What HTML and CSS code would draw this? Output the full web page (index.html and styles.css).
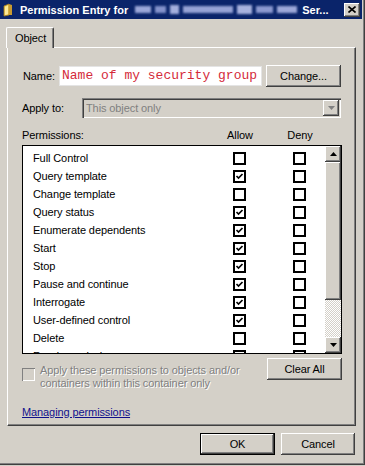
FILE: index.html
```html
<!DOCTYPE html>
<html lang="en">
<head>
    <meta charset="UTF-8">
    <title>Permission Entry</title>
    <link rel="stylesheet" href="styles.css">
</head>
<body>
    <div class="window">
        <div class="titlebar">
            <svg class="title-icon" width="10" height="14" viewBox="0 0 10 14">
                <path d="M1 3 L6 1 L6 12 L1 13 Z" fill="#f4d35c" stroke="#a07820" stroke-width="0.8"/>
                <path d="M6 1 L9 2 L9 12 L6 12 Z" fill="#c89a30"/>
                <path d="M2 4 L5 2.6 L5 11 L2 12 Z" fill="#fbe89a"/>
            </svg>
            <span class="title-text">Permission Entry for</span>
            <span class="blur-name">
                <i class="b1"></i><i class="b2"></i><i class="b3"></i><i class="b4"></i><i class="b5"></i><i class="b6"></i><i class="b7"></i>
            </span>
            <span class="title-text">Ser...</span>
            <button class="close-btn raised" type="button">
                <svg width="8" height="7" viewBox="0 0 8 7"><path d="M0.5 0.5 L7.5 6.5 M7.5 0.5 L0.5 6.5" stroke="#000" stroke-width="1.6"/></svg>
            </button>
        </div>

        <div class="tabs">
            <div class="tab">Object</div>
        </div>

        <div class="panel">
            <div class="name-row">
                <label class="label-name">Name:</label>
                <div class="name-field">Name of my security group</div>
                <button class="btn raised" type="button">Change...</button>
            </div>

            <div class="apply-row">
                <label class="label-apply">Apply to:</label>
                <div class="select">
                    <span>This object only</span>
                    <span class="select-arrow raised">
                        <svg width="7" height="4" viewBox="0 0 7 4"><path d="M0 0 H7 L3.5 4 Z" fill="#808080"/></svg>
                    </span>
                </div>
            </div>

            <div class="perm-header">
                <span>Permissions:</span>
                <span class="col-head">Allow</span>
                <span></span>
                <span class="col-head">Deny</span>
            </div>

            <div class="perm-list">
                <div class="rows">
                    <div class="row"><span>Full Control</span><i class="cb"></i><span></span><i class="cb"></i></div>
                    <div class="row"><span>Query template</span><i class="cb checked"></i><span></span><i class="cb"></i></div>
                    <div class="row"><span>Change template</span><i class="cb"></i><span></span><i class="cb"></i></div>
                    <div class="row"><span>Query status</span><i class="cb checked"></i><span></span><i class="cb"></i></div>
                    <div class="row"><span>Enumerate dependents</span><i class="cb checked"></i><span></span><i class="cb"></i></div>
                    <div class="row"><span>Start</span><i class="cb checked"></i><span></span><i class="cb"></i></div>
                    <div class="row"><span>Stop</span><i class="cb checked"></i><span></span><i class="cb"></i></div>
                    <div class="row"><span>Pause and continue</span><i class="cb checked"></i><span></span><i class="cb"></i></div>
                    <div class="row"><span>Interrogate</span><i class="cb checked"></i><span></span><i class="cb"></i></div>
                    <div class="row"><span>User-defined control</span><i class="cb checked"></i><span></span><i class="cb"></i></div>
                    <div class="row"><span>Delete</span><i class="cb"></i><span></span><i class="cb"></i></div>
                    <div class="row"><span>Read permissions</span><i class="cb"></i><span></span><i class="cb"></i></div>
                </div>
                <div class="scrollbar">
                    <span class="scroll-btn raised">
                        <svg width="7" height="4" viewBox="0 0 7 4"><path d="M0 4 H7 L3.5 0 Z" fill="#000"/></svg>
                    </span>
                    <span class="scroll-thumb raised"></span>
                    <span class="scroll-track"></span>
                    <span class="scroll-btn raised">
                        <svg width="7" height="4" viewBox="0 0 7 4"><path d="M0 0 H7 L3.5 4 Z" fill="#000"/></svg>
                    </span>
                </div>
            </div>

            <div class="bottom-row">
                <div class="apply-check">
                    <i class="cb-disabled"></i>
                    <span class="disabled-text">Apply these permissions to objects and/or<br>containers within this container only</span>
                </div>
                <button class="btn raised" type="button">Clear All</button>
            </div>

            <a class="help-link" href="#">Managing permissions</a>
        </div>

        <div class="footer">
            <button class="btn raised btn-default" type="button">OK</button>
            <button class="btn raised btn-cancel" type="button">Cancel</button>
        </div>
    </div>
</body>
</html>
```

FILE: styles.css
```css
* {
    margin: 0;
    padding: 0;
    box-sizing: border-box;
}

body {
    background-color: #d4d0c8;
    font-family: "Liberation Sans", Arial, sans-serif;
    font-size: 11px;
    letter-spacing: -0.1px;
    color: #000;
}

.raised {
    background-color: #d4d0c8;
    box-shadow: inset -1px -1px #404040, inset 1px 1px #fff, inset -2px -2px #808080, inset 2px 2px #d4d0c8;
}

.window {
    width: 365px;
    height: 465px;
    padding-right: 3px;
    background-color: #d4d0c8;
    box-shadow: inset -1px -1px #404040, inset -2px -2px #808080;
}

.titlebar {
    height: 19px;
    background-color: #0a246a;
    display: flex;
    align-items: center;
    color: #fff;
    font-weight: bold;
    letter-spacing: 0;
}

.title-icon {
    margin-left: 3px;
}

.title-text {
    margin-left: 7px;
    white-space: nowrap;
}

.title-text + .blur-name {
    margin-left: 7px;
}

.blur-name {
    display: flex;
    align-items: center;
    gap: 4px;
    height: 10px;
    filter: blur(1px);

    i {
        display: block;
        height: 7px;
        background-color: #8794cc;
    }

    .b1 { width: 16px; background-color: #9aa6d8; }
    .b2 { width: 11px; background-color: #8391cb; }
    .b3 { width: 9px; height: 9px; background-color: #a3aedc; }
    .b4 { width: 50px; background-color: #95a2d5; }
    .b5 { width: 15px; height: 9px; background-color: #a8b2de; }
    .b6 { width: 17px; background-color: #8b98cf; }
    .b7 { width: 20px; background-color: #9ca7d8; }
}

.blur-name + .title-text {
    margin-left: 5px;
}

.close-btn {
    margin-left: auto;
    margin-right: 2px;
    width: 16px;
    height: 14px;
    border: none;
    display: flex;
    align-items: center;
    justify-content: center;
}

.tabs {
    margin-top: 8px;
    padding-left: 6px;
    display: flex;
}

.tab {
    position: relative;
    z-index: 1;
    width: 48px;
    height: 21px;
    margin-bottom: -1px;
    padding-top: 4px;
    padding-left: 8px;
    background-color: #d4d0c8;
    border-top: 1px solid #fff;
    border-left: 1px solid #fff;
    border-right: 1px solid #404040;
    border-radius: 2px 2px 0 0;
    box-shadow: inset -1px 0 #808080;
}

.panel {
    margin-left: 7px;
    width: 349px;
    height: 379px;
    padding: 0 13px 0 14px;
    border-top: 1px solid #fff;
    border-left: 1px solid #fff;
    border-right: 1px solid #404040;
    border-bottom: 1px solid #404040;
    box-shadow: inset -1px -1px #808080;
}

.btn {
    width: 75px;
    height: 22px;
    border: none;
    font-family: "Liberation Sans", Arial, sans-serif;
    font-size: 11px;
    letter-spacing: -0.1px;
    color: #000;
}

.name-row {
    margin-top: 17px;
    height: 22px;
    display: flex;
    align-items: center;
}

.label-name {
    width: 37px;
    padding-left: 1px;
}

.name-field {
    width: 203px;
    height: 20px;
    margin-right: 4px;
    padding-left: 2px;
    background-color: #fff;
    border: 1px solid #e4e4e4;
    color: #d42a3a;
    font-family: "Liberation Mono", "Courier New", monospace;
    font-size: 13px;
    letter-spacing: 0;
    line-height: 18px;
    white-space: nowrap;
}

.apply-row {
    margin-top: 11px;
    height: 20px;
    display: flex;
    align-items: center;
}

.label-apply {
    width: 60px;
}

.select {
    width: 259px;
    height: 20px;
    display: flex;
    align-items: center;
    justify-content: space-between;
    padding: 2px 2px 2px 4px;
    color: #808080;
    background-color: #d4d0c8;
    box-shadow: inset 1px 1px #808080, inset 2px 2px #404040, inset -1px -1px #fff, inset -2px -2px #d4d0c8;
}

.select-arrow {
    width: 16px;
    height: 16px;
    display: flex;
    align-items: center;
    justify-content: center;
}

.perm-header {
    margin-top: 10px;
    height: 14px;
    line-height: 14px;
    display: grid;
    grid-template-columns: 198px 40px 20px 40px 1fr;
}

.col-head {
    text-align: center;
}

.perm-list {
    margin-top: 3px;
    width: 320px;
    height: 209px;
    border: 1px solid #000;
    background-color: #fff;
    display: flex;
}

.rows {
    flex: 1;
    overflow: hidden;
    padding-top: 3px;
}

.row {
    height: 18px;
    padding-left: 10px;
    display: grid;
    grid-template-columns: 200px 13px 47px 13px;
    align-items: center;
    white-space: nowrap;
}

.cb {
    display: block;
    width: 13px;
    height: 13px;
    border: 2px solid #000;
    background-color: #fff;
}

.cb.checked {
    background-image: url("data:image/svg+xml;utf8,<svg xmlns='http://www.w3.org/2000/svg' width='9' height='9' viewBox='0 0 9 9'><path d='M1.5 4 L3.5 6 L7.5 2' fill='none' stroke='black' stroke-width='1.7'/></svg>");
    background-repeat: no-repeat;
}

.scrollbar {
    width: 16px;
    display: flex;
    flex-direction: column;
}

.scroll-btn {
    height: 16px;
    display: flex;
    align-items: center;
    justify-content: center;
}

.scroll-thumb {
    height: 138px;
}

.scroll-track {
    flex: 1;
    background: repeating-conic-gradient(#fff 0 25%, #d4d0c8 0 50%) 0 0 / 2px 2px;
}

.bottom-row {
    margin-top: 4px;
    height: 32px;
    display: flex;
    justify-content: space-between;
    align-items: flex-start;
}

.apply-check {
    margin-top: 6px;
    display: flex;
    align-items: flex-start;
    gap: 5px;
}

.cb-disabled {
    display: block;
    width: 13px;
    height: 13px;
    margin-top: 4px;
    background-color: #d4d0c8;
    box-shadow: inset 1px 1px #808080, inset -1px -1px #fff;
}

.disabled-text {
    line-height: 13px;
    color: #808080;
    text-shadow: 1px 1px #fff;
    white-space: nowrap;
}

.help-link {
    display: inline-block;
    margin-top: 15px;
    line-height: 14px;
    color: #10108c;
    text-decoration: underline;
}

.footer {
    margin-top: 7px;
    padding-right: 7px;
    display: flex;
    justify-content: flex-end;
    gap: 6px;
}

.btn-default {
    border: 1px solid #000;
}

.btn-cancel {
    width: 74px;
}
```
